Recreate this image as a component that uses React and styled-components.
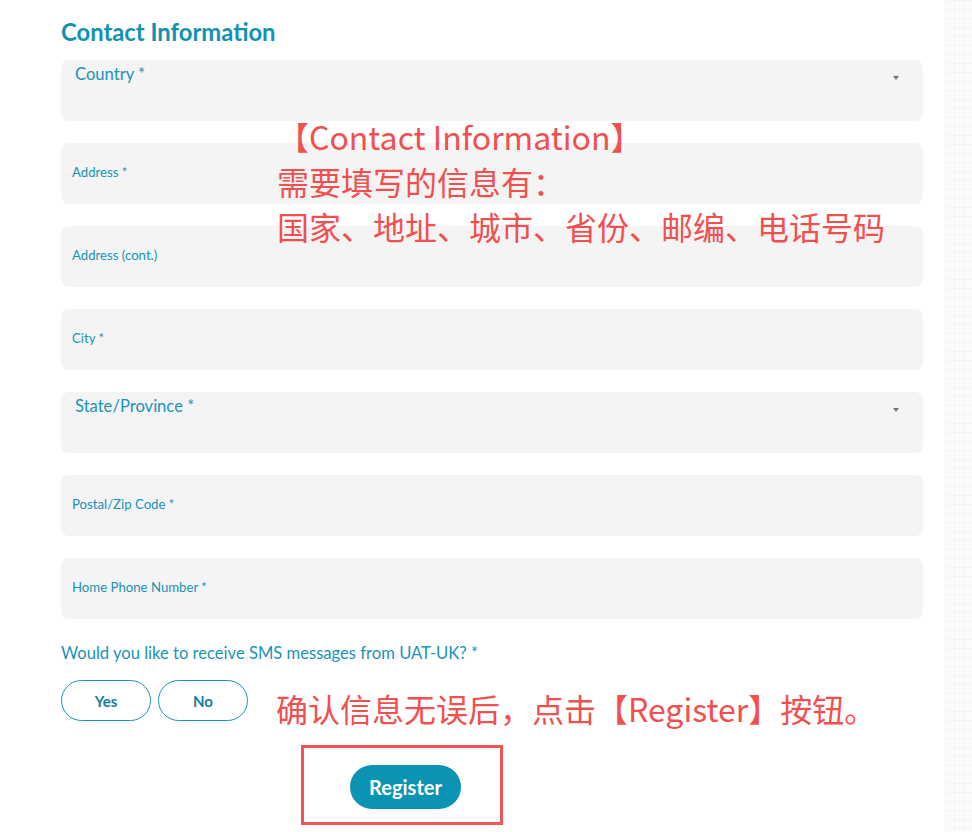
import styled, { createGlobalStyle } from "styled-components";

const GlobalStyle = createGlobalStyle`
  html, body {
    margin: 0;
    padding: 0;
    background: #ffffff;
    font-family: "Lato", "Noto Sans", sans-serif;
  }
`;

const Page = styled.div`
  position: relative;
  width: 972px;
  height: 832px;
  overflow: hidden;
  display: flex;
`;

const Form = styled.section`
  width: 862px;
  margin-left: 61px;
  display: flex;
  flex-direction: column;
`;

const Title = styled.h2`
  margin: 18px 0 0;
  height: 42px;
  font-size: 23.8px;
  font-weight: 700;
  color: #1292b3;
  line-height: 28px;
`;

const Fields = styled.div`
  display: flex;
  flex-direction: column;
  gap: 22px;
`;

const Field = styled.div`
  position: relative;
  height: 61px;
  border-radius: 8px;
  background: #f4f4f4;
  display: flex;
  align-items: ${(p) => (p.$select ? "flex-start" : "center")};
  padding: ${(p) => (p.$select ? "4px 14px" : "0 11px 3px")};
  box-sizing: border-box;
`;

const Label = styled.span`
  color: #1a93b5;
  font-size: ${(p) => (p.$select ? "16.6px" : "13.2px")};
  line-height: ${(p) => (p.$select ? "20px" : "16px")};
`;

const Arrow = styled.span`
  position: absolute;
  right: 24px;
  top: 16px;
  width: 0;
  height: 0;
  border-left: 3px solid transparent;
  border-right: 3px solid transparent;
  border-top: 4px solid #777;
`;

const Question = styled.p`
  margin: 24px 0 0;
  font-size: 16.6px;
  line-height: 20px;
  color: #1a93b5;
`;

const Choices = styled.div`
  display: flex;
  gap: 7px;
  margin-top: 17px;
`;

const Choice = styled.button`
  width: 90px;
  height: 41px;
  border: 1px solid #1a93b5;
  border-radius: 21px;
  background: #fff;
  color: #137f9c;
  font-family: inherit;
  font-size: 15px;
  font-weight: 700;
`;

const SubmitBox = styled.div`
  margin: 24px 0 0 240px;
  width: 202px;
  height: 80px;
  box-sizing: border-box;
  border: 3px solid #f05454;
  display: flex;
  justify-content: center;
  align-items: center;
  padding: 3px 0 0 7px;
`;

const Register = styled.button`
  width: 111px;
  height: 44px;
  border: none;
  border-radius: 22px;
  background: #0b93b3;
  color: #fff;
  font-family: inherit;
  font-size: 20px;
  font-weight: 700;
`;

const Strip = styled.div`
  margin-left: 22px;
  width: 27px;
  background-color: #fbfbfb;
  background-image:
    linear-gradient(90deg, rgba(0,0,0,0.025) 1px, transparent 1px),
    linear-gradient(rgba(0,0,0,0.025) 1px, transparent 1px);
  background-size: 9px 9px;
`;

const Note = styled.div`
  position: absolute;
  left: ${(p) => p.$x}px;
  top: ${(p) => p.$y}px;
  color: #f24f4f;
  font-family: "Noto Sans CJK SC", "Noto Sans", sans-serif;
  font-size: 32px;
  line-height: 45px;
  white-space: nowrap;
`;

const fields = [
  { label: "Country *", select: true },
  { label: "Address *" },
  { label: "Address (cont.)" },
  { label: "City *" },
  { label: "State/Province *", select: true },
  { label: "Postal/Zip Code *" },
  { label: "Home Phone Number *" },
];

export default function App() {
  return (
    <Page>
      <GlobalStyle />
      <Form>
        <Title>Contact Information</Title>
        <Fields>
          {fields.map((f) => (
            <Field key={f.label} $select={f.select}>
              <Label $select={f.select}>{f.label}</Label>
              {f.select && <Arrow />}
            </Field>
          ))}
        </Fields>
        <Question>Would you like to receive SMS messages from UAT-UK? *</Question>
        <Choices>
          <Choice>Yes</Choice>
          <Choice>No</Choice>
        </Choices>
        <SubmitBox>
          <Register>Register</Register>
        </SubmitBox>
      </Form>
      <Strip />
      <Note $x={277} $y={114}>
        【Contact Information】
        <br />
        需要填写的信息有：
        <br />
        国家、地址、城市、省份、邮编、电话号码
      </Note>
      <Note $x={276} $y={686}>确认信息无误后，点击【Register】按钮。</Note>
    </Page>
  );
}
